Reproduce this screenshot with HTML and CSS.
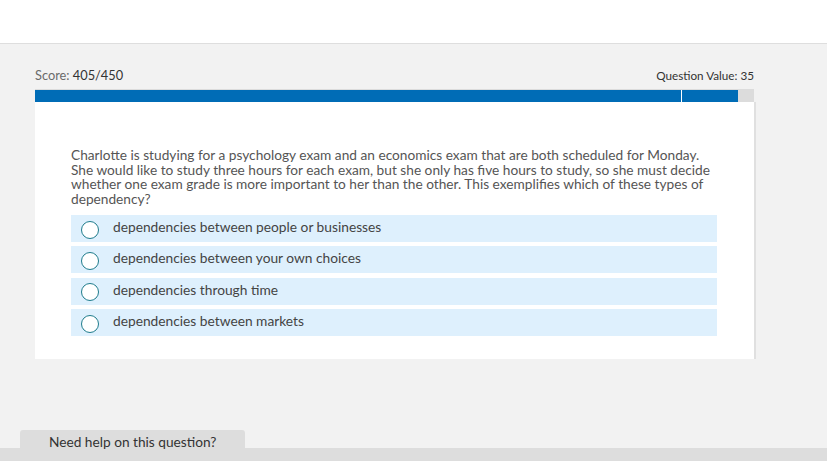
FILE: index.html
```html
<!DOCTYPE html>
<html lang="en">
<head>
<meta charset="utf-8">
<title>Question</title>
<link rel="stylesheet" href="styles.css">
</head>
<body>
<header class="topbar"></header>
<main class="main">
  <div class="meta">
    <div class="score"><span class="score-label">Score:</span> <span class="score-value">405/450</span></div>
    <div class="qvalue">Question Value: 35</div>
  </div>
  <div class="progress">
    <div class="progress-fill">
      <div class="seg seg-a"></div>
      <div class="seg seg-b"></div>
    </div>
  </div>
  <section class="card">
    <p class="question">Charlotte is studying for a psychology exam and an economics exam that are both scheduled for Monday. She would like to study three hours for each exam, but she only has five hours to study, so she must decide whether one exam grade is more important to her than the other. This exemplifies which of these types of dependency?</p>
    <div class="options">
      <label class="option"><span class="radio"></span><span class="opt-text">dependencies between people or businesses</span></label>
      <label class="option"><span class="radio"></span><span class="opt-text">dependencies between your own choices</span></label>
      <label class="option"><span class="radio"></span><span class="opt-text">dependencies through time</span></label>
      <label class="option"><span class="radio"></span><span class="opt-text">dependencies between markets</span></label>
    </div>
  </section>
</main>
<footer class="footer">
  <div class="help-tab">Need help on this question?</div>
</footer>
</body>
</html>
```
FILE: styles.css
```css
html, body {
  margin: 0;
  padding: 0;
}
body {
  background: #f2f2f2;
  font-family: "Lato", "Liberation Sans", sans-serif;
  color: #333;
  height: 461px;
  overflow: hidden;
}
.topbar {
  height: 43px;
  background: #fff;
  border-bottom: 1px solid #dedede;
}
.main {
  padding: 0 73px 0 35px;
}
.meta {
  display: flex;
  justify-content: space-between;
  align-items: flex-end;
  margin-top: 24px;
  height: 15px;
  font-size: 12px;
  line-height: 15px;
}
.score { font-size: 12.8px; }
.score-label { color: #6a6a6a; }
.score-value { color: #333; }
.qvalue { color: #333; font-size: 11.7px; }
.progress {
  margin-top: 6px;
  height: 12px;
  padding-top: 1px;
  background: #dcdcdc;
}
.progress-fill {
  display: flex;
  gap: 1px;
  width: 703px;
  height: 12px;
  background: #fff;
}
.seg { background: #006cb6; height: 12px; }
.seg-a { width: 646px; }
.seg-b { flex: 1; }
.card {
  background: #fff;
  height: 257px;
  box-sizing: border-box;
  padding: 46px 37px 0 36px;
  box-shadow: 2px 0 0 #e0e0e0;
}
.question {
  margin: 0;
  font-size: 13.7px;
  line-height: 14.5px;
  color: #555;
}
.options {
  margin-top: 9px;
  display: flex;
  flex-direction: column;
  gap: 4.4px;
}
.option {
  display: flex;
  align-items: center;
  height: 27px;
  background: #def0fd;
  padding-left: 10px;
}
.radio {
  width: 18px;
  height: 18px;
  box-sizing: border-box;
  border: 1.6px solid #1f7c8c;
  border-radius: 50%;
  background: #fff;
  margin-right: 14px;
  margin-top: 2px;
  flex: none;
}
.opt-text {
  font-size: 13.75px;
  line-height: 16px;
  padding-bottom: 3px;
  color: #444;
}
.footer {
  margin-top: 71px;
  height: 31px;
  background: linear-gradient(to bottom, transparent 18px, #dddddd 18px);
}
.help-tab {
  margin-left: 20px;
  width: 225px;
  height: 31px;
  box-sizing: border-box;
  padding: 3px 0 0 29px;
  background: #dddddd;
  border-radius: 3px 3px 0 0;
  font-size: 13.7px;
  line-height: 18px;
  color: #333;
}
```
